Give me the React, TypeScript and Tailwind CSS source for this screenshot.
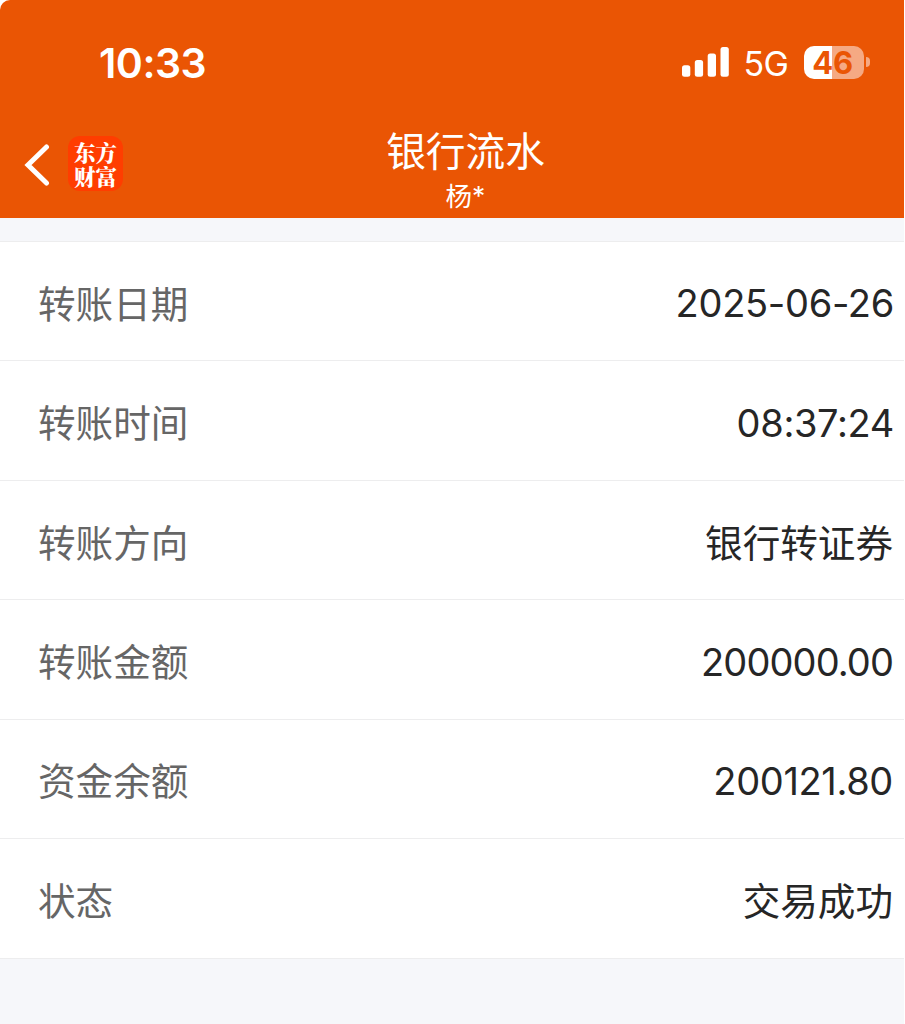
import { FC } from "react";

interface RowProps {
  label: string;
  value: string;
  valueClass: string;
}

const rows: RowProps[] = [
  {
    label: "转账日期",
    value: "2025-06-26",
    valueClass: "pb-[3px] text-[38px] tracking-[-0.3px]",
  },
  {
    label: "转账时间",
    value: "08:37:24",
    valueClass: "pb-[3px] text-[38px] tracking-[-0.35px]",
  },
  {
    label: "转账方向",
    value: "银行转证券",
    valueClass: "pr-[1px] text-[37.6px]",
  },
  {
    label: "转账金额",
    value: "200000.00",
    valueClass: "pb-[3px] pr-[1px] text-[38px] tracking-[-0.9px]",
  },
  {
    label: "资金余额",
    value: "200121.80",
    valueClass: "pb-[3px] pr-[1px] text-[38px] tracking-[-0.35px]",
  },
  { label: "状态", value: "交易成功", valueClass: "pr-[1px] text-[37.6px]" },
];

const SignalIcon: FC = () => (
  <svg width="47" height="30" viewBox="0 0 47 30" fill="#fff">
    <rect x="0" y="18.3" width="8.3" height="11.4" rx="2.5" />
    <rect x="12.8" y="13" width="8.3" height="16.7" rx="2.5" />
    <rect x="25.7" y="6.5" width="8.3" height="23.2" rx="2.5" />
    <rect x="38.5" y="0" width="8.3" height="29.7" rx="2.5" />
  </svg>
);

const Battery: FC = () => (
  <div className="flex items-center">
    <div className="flex h-[33px] w-[60px] items-center justify-center rounded-[10px] bg-[linear-gradient(to_right,#fff_46.5%,#f5a983_46.5%)] pr-[2px] text-[31px] leading-[33px] font-bold tracking-[-0.3px] text-[#ea5504]">
      46
    </div>
    <div className="ml-[2px] h-[10px] w-[4px] rounded-r-full bg-[#f5a983]" />
  </div>
);

const StatusBar: FC = () => (
  <div className="flex h-[126px] justify-between pt-[36px] pr-[34.5px] pl-[99px] text-white">
    <div className="h-[52px] text-[41px] leading-[54px] font-semibold tracking-[-0.5px]">
      10:33
    </div>
    <div className="flex h-[52px] items-center">
      <SignalIcon />
      <span className="mr-[15px] ml-[14px] pt-[3px] text-[34px] leading-[52px] tracking-[-0.5px]">
        5G
      </span>
      <Battery />
    </div>
  </div>
);

const NavBar: FC = () => (
  <div className="grid h-[92px] grid-cols-[386px_159px_1fr] text-white">
    <div className="flex pt-[10px] pl-[24px]">
      <svg
        className="mt-[8px]"
        width="26"
        height="42"
        viewBox="0 0 26 42"
        fill="none"
        stroke="#fff"
        strokeWidth="5"
        strokeLinecap="round"
      >
        <path d="M22.5 3L4 21L22.5 39" />
      </svg>
      <div className="ml-[18px] h-[55px] w-[55px] rounded-[12px] bg-[#ff3d00] px-[6px] pt-[4px] font-['Noto_Serif_CJK_SC','Noto_Sans_CJK_SC',sans-serif] text-[21.5px] leading-[24px] font-black break-all">
        东方财富
      </div>
    </div>
    <div className="flex flex-col items-center whitespace-nowrap">
      <div className="text-[39.7px] leading-[52px]">银行流水</div>
      <div className="text-[26.5px] leading-[36px]">杨*</div>
    </div>
  </div>
);

const Row: FC<RowProps> = ({ label, value, valueClass }) => (
  <div className="flex h-[119.45px] items-center justify-between border-b border-[#ededee] pt-[7px] pr-[10px] pl-[38px] leading-[56px]">
    <span className="text-[37.6px] text-[#666]">{label}</span>
    <span className={`text-[#262626] ${valueClass}`}>{value}</span>
  </div>
);

const App: FC = () => {
  return (
    <div className="h-[1024px] w-[905px] overflow-hidden bg-white font-['Inter','Noto_Sans_CJK_SC',sans-serif]">
      <header className="mr-[1px] h-[218px] rounded-tl-[10px] bg-[#ea5504]">
        <StatusBar />
        <NavBar />
      </header>
      <div className="mr-[1px] h-[24px] border-b border-[#ededee] bg-[#f6f7fa]" />
      <main className="mr-[1px] bg-white">
        {rows.map((row) => (
          <Row key={row.label} {...row} />
        ))}
      </main>
      <div className="mr-[1px] h-[66px] bg-[#f6f7fa]" />
    </div>
  );
};

export default App;
